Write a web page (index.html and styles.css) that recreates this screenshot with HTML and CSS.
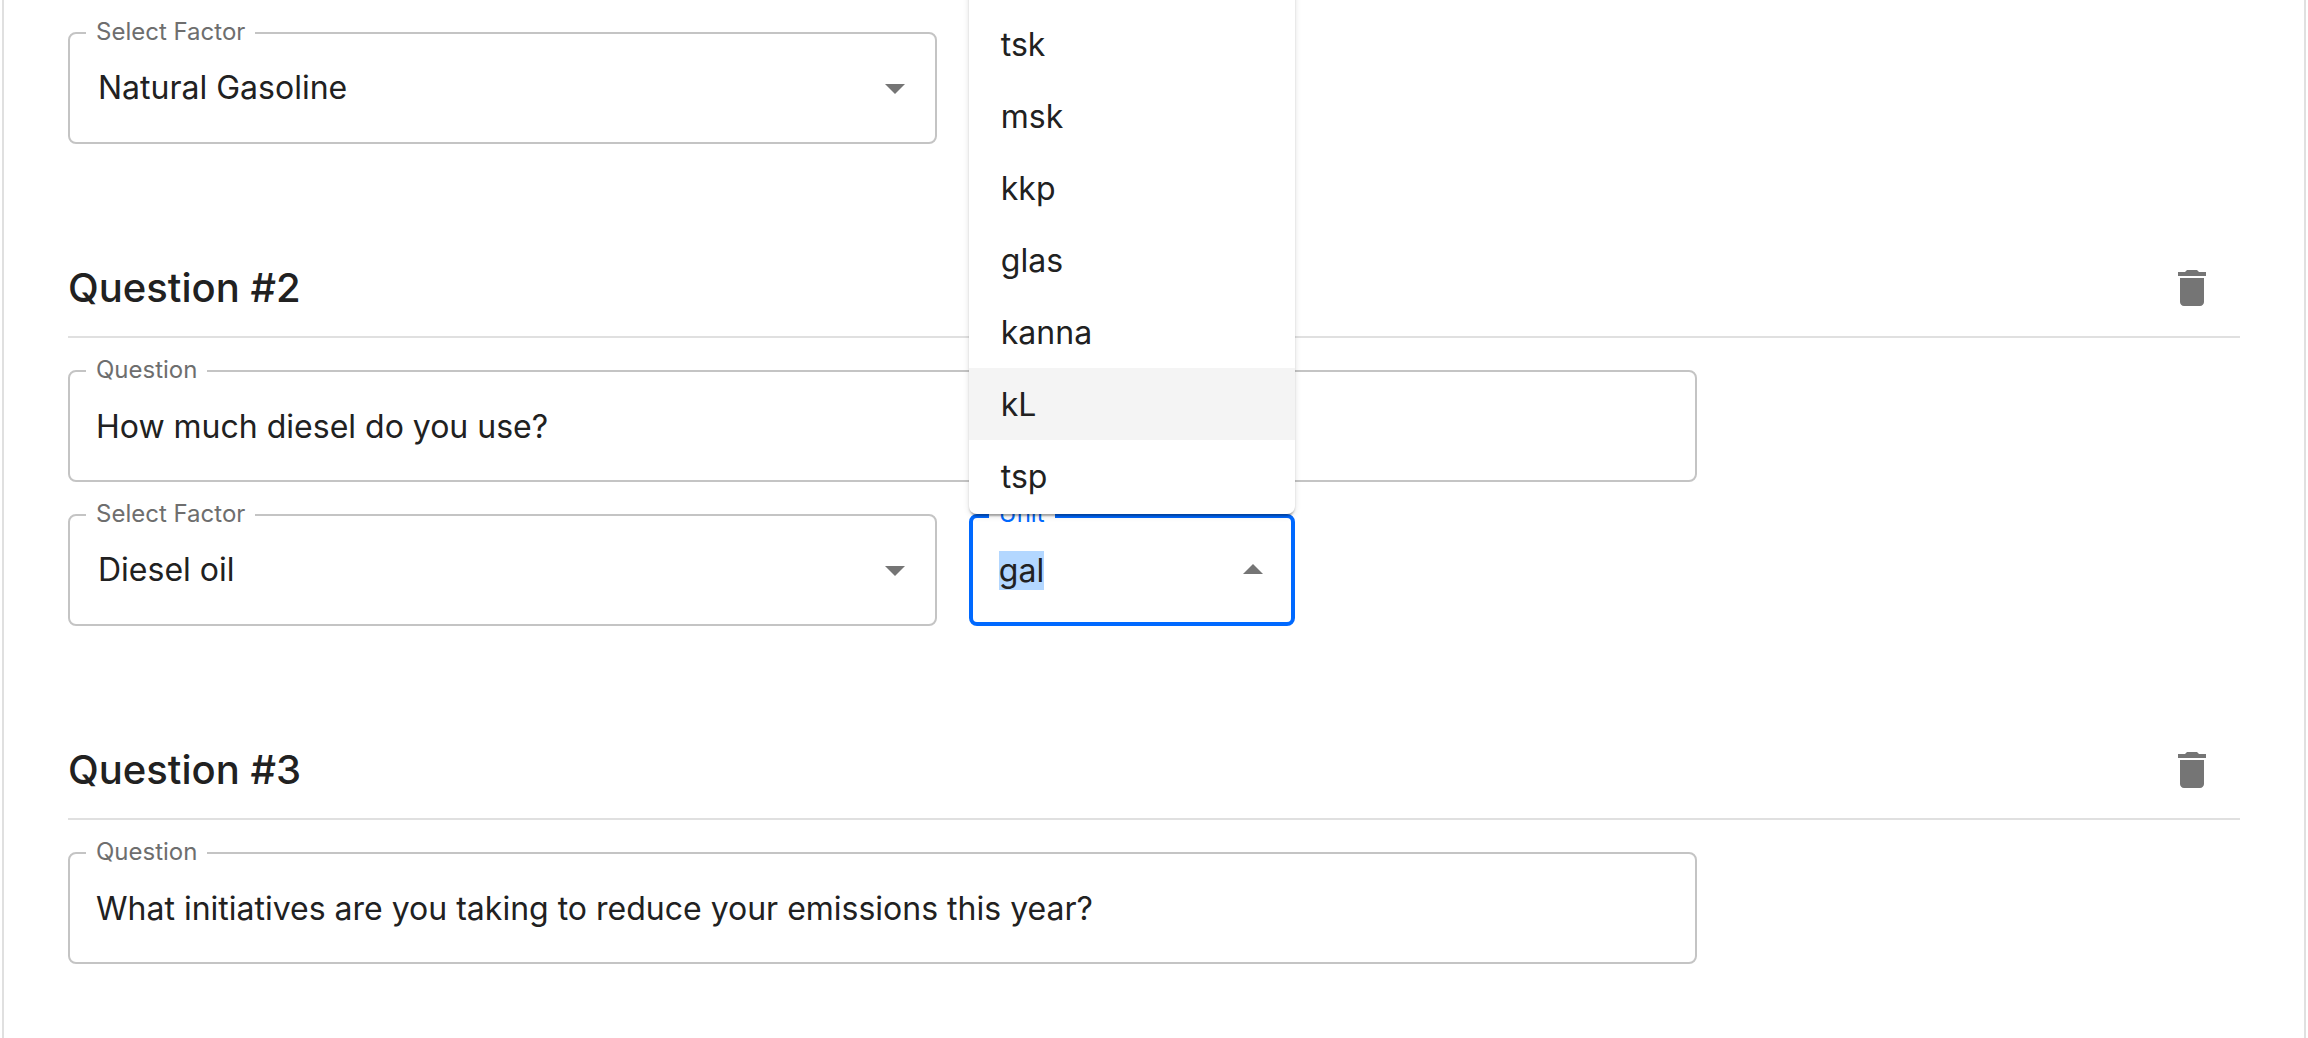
FILE: index.html
```html
<!DOCTYPE html>
<html lang="en">
<head>
    <meta charset="UTF-8">
    <meta name="viewport" content="width=device-width, initial-scale=1.0">
    <title>Edit Questions</title>
    <link rel="stylesheet" href="styles.css">
</head>
<body>
    <main class="card">
        <section class="question">
            <div class="row">
                <div class="field field-factor">
                    <label for="factor1">Select Factor</label>
                    <select id="factor1">
                        <option>Natural Gasoline</option>
                        <option>Diesel oil</option>
                    </select>
                    <svg class="arrow" viewBox="0 0 24 24"><path d="M7 10l5 5 5-5z"/></svg>
                </div>
                <div class="field field-unit">
                    <input type="text" id="unit1" aria-label="Unit">
                </div>
            </div>
        </section>

        <section class="question">
            <div class="question-header">
                <h2>Question #2</h2>
                <button class="delete-btn" type="button" aria-label="Delete question 2">
                    <svg viewBox="0 0 24 24"><path d="M6 19c0 1.1.9 2 2 2h8c1.1 0 2-.9 2-2V7H6v12zM19 4h-3.5l-1-1h-5l-1 1H5v2h14V4z"/></svg>
                </button>
            </div>
            <div class="field field-question">
                <label for="question2">Question</label>
                <input type="text" id="question2" value="How much diesel do you use?">
            </div>
            <div class="row">
                <div class="field field-factor">
                    <label for="factor2">Select Factor</label>
                    <select id="factor2">
                        <option>Diesel oil</option>
                        <option>Natural Gasoline</option>
                    </select>
                    <svg class="arrow" viewBox="0 0 24 24"><path d="M7 10l5 5 5-5z"/></svg>
                </div>
                <div class="field field-unit focused">
                    <label for="unit2">Unit</label>
                    <input type="text" id="unit2" value="gal" role="combobox" aria-expanded="true" aria-controls="unitList" autocomplete="off">
                    <svg class="arrow open" viewBox="0 0 24 24"><path d="M7 10l5 5 5-5z"/></svg>
                    <ul class="unit-list" id="unitList" role="listbox">
                        <li role="option">tsk</li>
                        <li role="option">msk</li>
                        <li role="option">kkp</li>
                        <li role="option">glas</li>
                        <li role="option">kanna</li>
                        <li role="option" class="active">kL</li>
                        <li role="option">tsp</li>
                    </ul>
                </div>
            </div>
        </section>

        <section class="question">
            <div class="question-header">
                <h2>Question #3</h2>
                <button class="delete-btn" type="button" aria-label="Delete question 3">
                    <svg viewBox="0 0 24 24"><path d="M6 19c0 1.1.9 2 2 2h8c1.1 0 2-.9 2-2V7H6v12zM19 4h-3.5l-1-1h-5l-1 1H5v2h14V4z"/></svg>
                </button>
            </div>
            <div class="field field-question">
                <label for="question3">Question</label>
                <input type="text" id="question3" value="What initiatives are you taking to reduce your emissions this year?">
            </div>
        </section>
    </main>

    <script>
        const unitInput = document.getElementById('unit2');
        unitInput.focus({ preventScroll: true });
        unitInput.select();
    </script>
</body>
</html>
```
FILE: styles.css
```css
* {
    box-sizing: border-box;
}
body {
    margin: 0;
    padding: 0 2px;
    background: #fff;
    color: #212121;
    font-family: Inter, "Liberation Sans", sans-serif;
    font-size: 32px;
}
.card {
    display: flex;
    flex-direction: column;
    gap: 96px;
    min-height: 100vh;
    padding: 32px 64px;
    border: 2px solid #e0e0e0;
    border-width: 0 2px;
}
.question {
    display: flex;
    flex-direction: column;
    gap: 32px;
}
.question-header {
    display: flex;
    align-items: center;
    justify-content: space-between;
    border-bottom: 2px solid #e0e0e0;
}
.question-header h2 {
    margin: 0;
    font-size: 40px;
    font-weight: 500;
    line-height: 64px;
}
.delete-btn {
    display: flex;
    padding: 24px;
    border: none;
    background: none;
    cursor: pointer;
}
.delete-btn svg {
    width: 48px;
    height: 48px;
    fill: #757575;
}
.row {
    display: flex;
    gap: 32px;
}
.field {
    position: relative;
    height: 112px;
    border: 2px solid #c4c4c4;
    border-radius: 8px;
}
.field-question {
    width: 75%;
}
.field-factor {
    width: 40%;
}
.field-unit {
    width: 15%;
}
.field label {
    position: absolute;
    top: -16px;
    left: 16px;
    padding: 0 10px;
    background: #fff;
    color: #6e6e6e;
    font-size: 24px;
    line-height: 28px;
}
.field input,
.field select {
    display: block;
    width: 100%;
    height: 100%;
    padding: 0 26px;
    border: none;
    outline: none;
    border-radius: 8px;
    background: none;
    color: inherit;
    font: inherit;
    line-height: 46px;
    appearance: none;
}
.field select {
    padding: 0 28px;
}
.field input::selection {
    background: #b3d7ff;
    color: #212121;
}
.arrow {
    position: absolute;
    top: 30px;
    right: 16px;
    width: 48px;
    height: 48px;
    fill: #757575;
    pointer-events: none;
}
.arrow.open {
    top: 28px;
    right: 14px;
    transform: rotate(180deg);
}
.field.focused {
    border: 4px solid #0069ff;
}
.focused label {
    top: -18px;
    color: #0069ff;
}
.unit-list {
    position: absolute;
    z-index: 1;
    bottom: calc(100% + 4px);
    left: -4px;
    right: -4px;
    margin: 0;
    padding: 40px 0 2px;
    border-radius: 8px;
    background: #fff;
    box-shadow: 0 4px 2px -2px rgba(0, 0, 0, 0.2), 0 2px 2px rgba(0, 0, 0, 0.14), 0 2px 6px rgba(0, 0, 0, 0.12);
    list-style: none;
}
.unit-list li {
    padding: 2px 32px 0;
    line-height: 70px;
    cursor: pointer;
}
.unit-list .active {
    background: #f4f4f4;
}
```
